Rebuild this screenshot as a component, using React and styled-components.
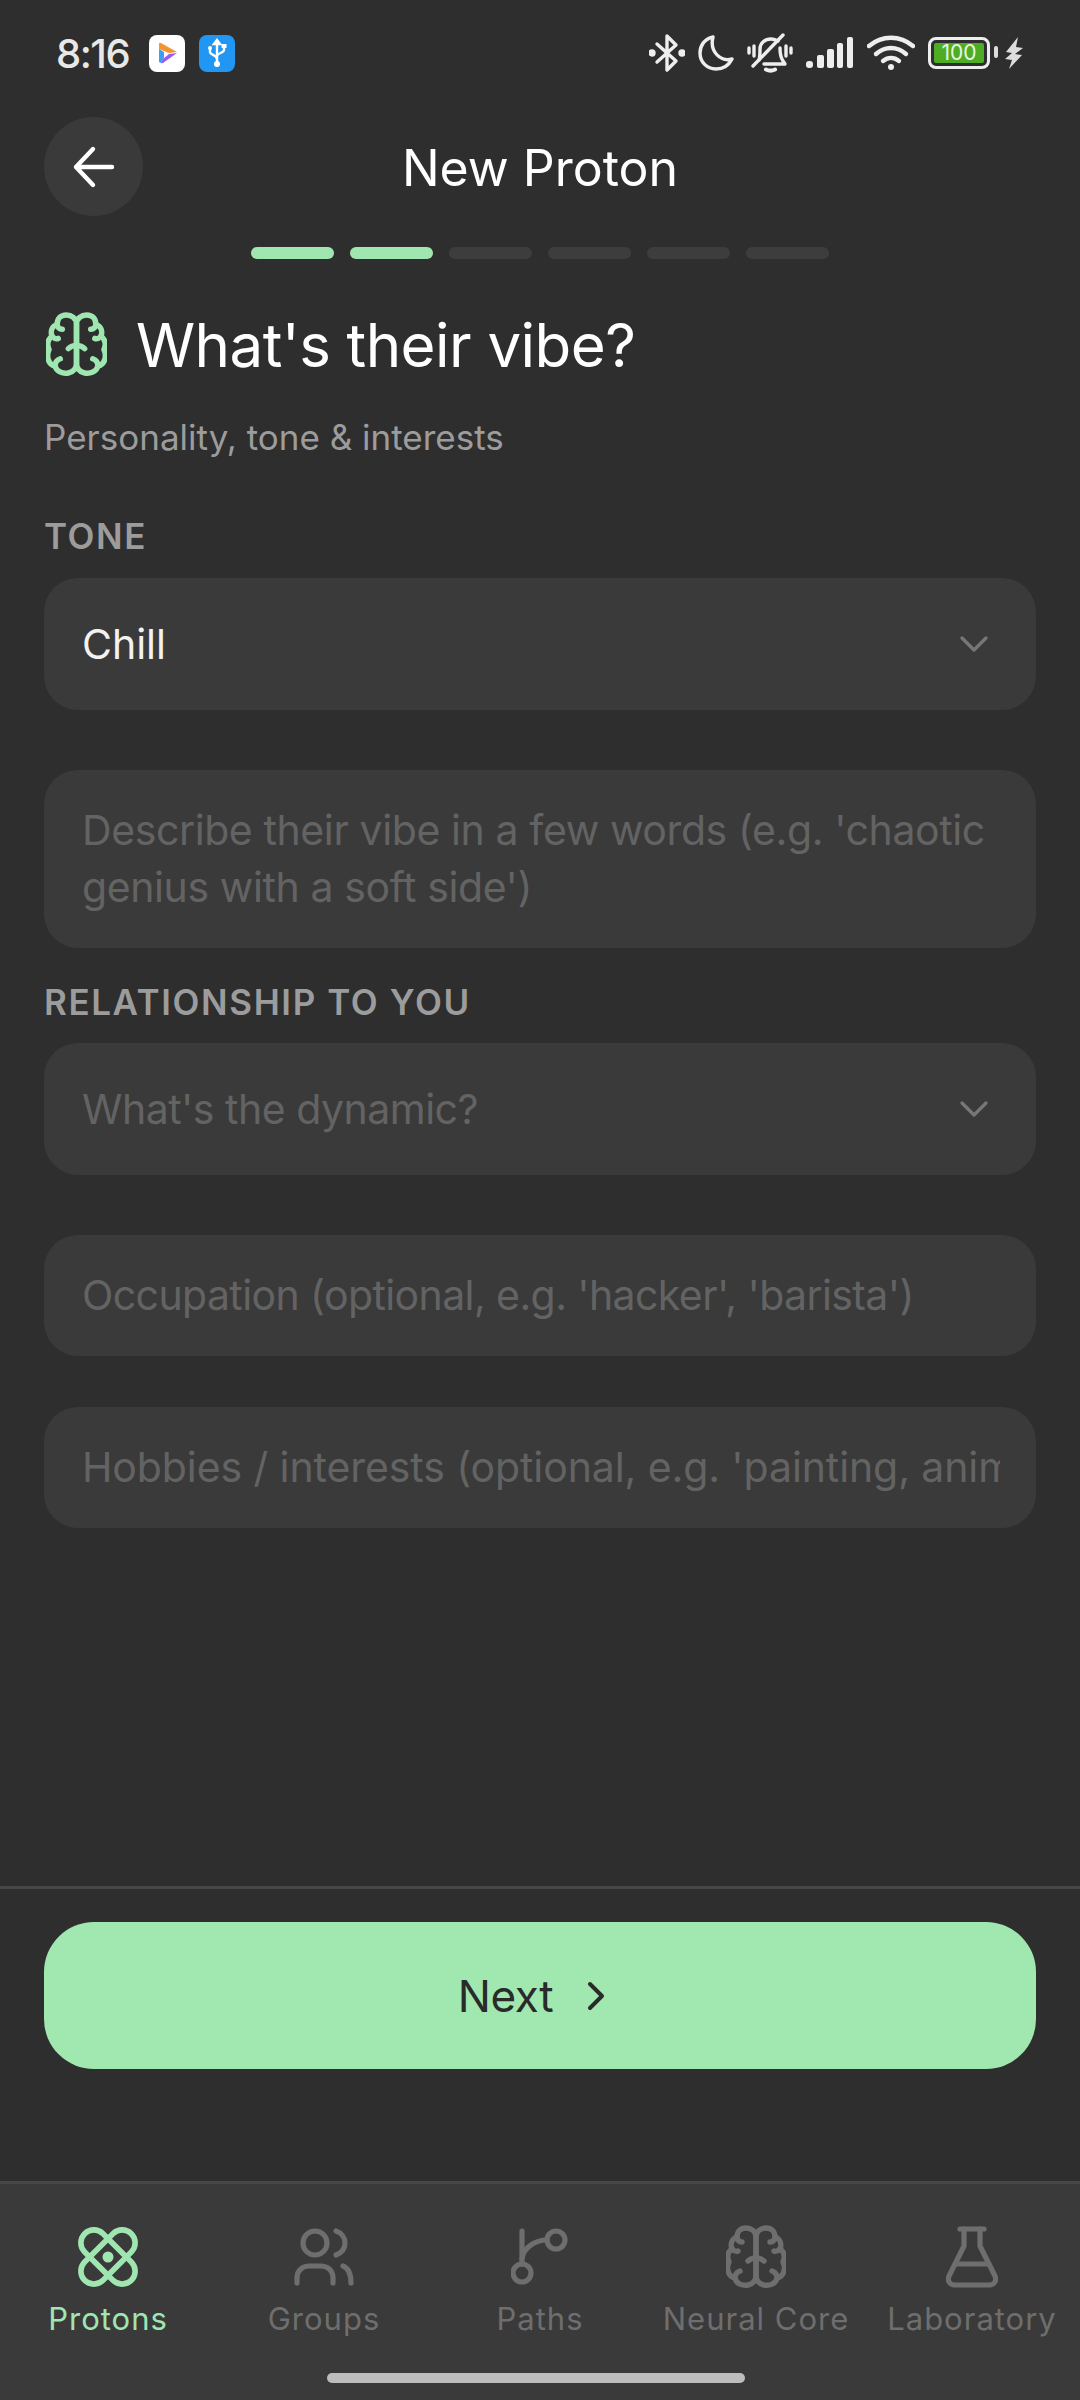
import React from 'react'
import styled, { createGlobalStyle } from 'styled-components'

const GlobalStyle = createGlobalStyle`
  html, body {
    margin: 0;
    padding: 0;
    background: #2e2e2e;
  }
  * {
    box-sizing: border-box;
  }
`

const FONT = `Inter, "Noto Sans", sans-serif`

const BluetoothIcon = () => (
  <svg width="36" height="40" viewBox="0 0 36 40" fill="none" stroke="#eee" strokeWidth="3.4" strokeLinejoin="round" strokeLinecap="round">
    <path d="M8 11l19 17-9 9V3l9 9L8 29" />
    <circle cx="3" cy="20" r="2" fill="#eee" />
    <circle cx="33" cy="20" r="2" fill="#eee" />
  </svg>
)

const MoonIcon = () => (
  <svg width="36" height="38" viewBox="0 0 36 38" fill="none" stroke="#eee" strokeWidth="3.4" strokeLinejoin="round">
    <path d="M15 3C6 5 2 12 2 19c0 9 7 16 16 16 7 0 13-4 16-10-10 3-23-6-19-22z" />
  </svg>
)

const MutedBellIcon = () => (
  <svg width="46" height="40" viewBox="0 0 46 40" fill="none" stroke="#eee" strokeWidth="3.4" strokeLinecap="round" strokeLinejoin="round">
    <path d="M12 27c1-3 1-8 1-11 0-6 5-10 11-10 3 0 5 1 7 2" />
    <path d="M33 15c0 6 1 10 3 13l2 3H17" />
    <path d="M19 36.500c3 1.500 6 1.500 9 0" strokeWidth="4" />
    <path d="M36 2L6 33" />
    <path d="M7 13v10M2 15v5M39 13v10M44 15v5" />
  </svg>
)

const SignalIcon = () => (
  <svg width="48" height="32" viewBox="0 0 48 32" fill="#eee">
    <rect x="0" y="24" width="7" height="7" rx="3" />
    <rect x="11" y="18" width="7" height="13" rx="2" />
    <rect x="21" y="12" width="7" height="19" rx="2" />
    <rect x="31" y="6" width="6" height="25" rx="2" />
    <rect x="41" y="0" width="6" height="31" rx="2" />
  </svg>
)

const WifiIcon = () => (
  <svg width="48" height="36" viewBox="0 0 48 36" fill="none" stroke="#eee" strokeWidth="4.4" strokeLinecap="round">
    <path d="M2 11c13-11 31-11 44 0" />
    <path d="M9 19c9-8 21-8 30 0" />
    <path d="M16 26c5-4 11-4 16 0" />
    <circle cx="24" cy="32" r="3" fill="#eee" stroke="none" />
  </svg>
)

const BoltIcon = () => (
  <svg width="18" height="32" viewBox="0 0 18 32" fill="#ddd">
    <path d="M13 0L1 15l6 1-7 6 7 1-3 9 13-14-7-1 8-6-7-1z" />
  </svg>
)

const PlayLogo = () => (
  <svg width="36" height="37" viewBox="0 0 36 37">
    <path d="M10 9q0-2 2-1l16 9-8 1-10-4z" fill="#f59331" />
    <path d="M28 18L14 28q-2 1-2-1l2-3 6-5z" fill="#9a5cf0" />
    <path d="M10 14l5 3v6l-3 5-2-1z" fill="#3d9df3" />
  </svg>
)

const UsbGlyph = () => (
  <svg width="22" height="30" viewBox="0 0 22 30" fill="none" stroke="#fff" strokeWidth="2.4" strokeLinecap="round">
    <path d="M11 4v22" />
    <path d="M8 6l3-4 3 4z" fill="#fff" />
    <path d="M4 11v3c0 3 7 3 7 7" />
    <path d="M18 9v3c0 3-7 3-7 6" />
    <circle cx="4" cy="10" r="2" fill="#fff" stroke="none" />
    <rect x="15.500" y="6" width="5" height="4" fill="#fff" stroke="none" />
    <circle cx="11" cy="26" r="3" fill="#fff" stroke="none" />
  </svg>
)

const brainHalf = (
  <>
    <path d="M30 12C30 6 25 3 20 3 14 3 11 7 11 12 6 14 4 19 6 24 1 27 1 33 3 37 0 43 2 52 9 53 10 59 17 61 22 60 27 59 30 55 30 50z" />
    <path d="M11 12c0 3 2 5 5 5M6 24c2 2 4 3 6 2M9 53c0-4 2-6 5-7M30 33c-3 0-6 1-8 3" />
  </>
)

const BrainIcon = ({ size }) => (
  <svg width={size} height={size * 64 / 60} viewBox="0 0 60 64" fill="none" stroke="currentColor" strokeWidth="5.4" strokeLinecap="round" strokeLinejoin="round">
    <g>{brainHalf}</g>
    <g transform="translate(60 0) scale(-1 1)">{brainHalf}</g>
  </svg>
)

const AtomIcon = () => (
  <svg width="60" height="60" viewBox="0 0 60 60" fill="none" stroke="currentColor" strokeWidth="5.600">
    <rect x="-3" y="17" width="66" height="26" rx="13" transform="rotate(45 30 30)" />
    <rect x="-3" y="17" width="66" height="26" rx="13" transform="rotate(-45 30 30)" />
    <circle cx="30" cy="30" r="5.500" fill="currentColor" stroke="none" />
  </svg>
)

const GroupsIcon = () => (
  <svg width="62" height="58" viewBox="0 0 62 58" fill="none" stroke="currentColor" strokeWidth="5.2" strokeLinecap="round">
    <circle cx="22" cy="15" r="12" />
    <path d="M4 55v-5c0-8 6-12 12-12h12c6 0 12 4 12 12v5" />
    <path d="M43 3c6 2 9 7 9 12 0 6-4 10-9 12" />
    <path d="M50 38c5 2 8 7 8 17" />
  </svg>
)

const PathIcon = () => (
  <svg width="58" height="58" viewBox="0 0 58 58" fill="none" stroke="currentColor" strokeWidth="5.200" strokeLinecap="round">
    <path d="M11 3v33" />
    <path d="M11 31c1-11 13-19 25-19" />
    <circle cx="11" cy="45" r="9" />
    <circle cx="45" cy="12" r="9" />
  </svg>
)

const FlaskIcon = () => (
  <svg width="52" height="62" viewBox="0 0 52 62" fill="none" stroke="currentColor" strokeWidth="5.200" strokeLinecap="round" strokeLinejoin="round">
    <path d="M14 3h24" />
    <path d="M18 3v17L3 50c-2 5 1 9 6 9h34c5 0 8-4 6-9L34 20V3" />
    <path d="M12 38h28" />
  </svg>
)

const Chevron = () => (
  <ChevronWrap>
    <svg width="28" height="18" viewBox="0 0 28 18" fill="none" stroke="#777" strokeWidth="3.200" strokeLinecap="round" strokeLinejoin="round">
      <path d="M2 3l12 12L26 3" />
    </svg>
  </ChevronWrap>
)

const ChevronWrap = styled.div`
  display: flex;
  margin-right: 12px;
`

const Page = styled.div`
  width: 1080px;
  height: 2400px;
  display: flex;
  flex-direction: column;
  background: #2e2e2e;
  font-family: ${FONT};
  overflow: hidden;
`

const StatusBar = styled.div`
  height: 106px;
  padding: 0 57px 0 56px;
  display: flex;
  align-items: center;
  justify-content: space-between;
`

const StatusLeft = styled.div`
  display: flex;
  align-items: center;
  gap: 14px;
`

const Clock = styled.span`
  font-size: 40px;
  font-weight: 500;
  color: #e8e8e8;
  letter-spacing: -1.5px;
  margin-right: 6px;
`

const AppTile = styled.div`
  width: 36px;
  height: 37px;
  border-radius: 8px;
  background: ${p => p.$bg};
  display: flex;
  align-items: center;
  justify-content: center;
`

const StatusRight = styled.div`
  display: flex;
  align-items: center;
  gap: 13px;
`

const Battery = styled.div`
  width: 62px;
  height: 32px;
  border: 3px solid #eee;
  border-radius: 8px;
  padding: 3px;
  margin-right: 2px;
  position: relative;
  display: flex;

  &::after {
    content: '';
    position: absolute;
    right: -11px;
    top: 6px;
    width: 4px;
    height: 12px;
    border-radius: 2px;
    background: #ddd;
  }
`

const BatteryFill = styled.div`
  flex: 1;
  background: #4fad24;
  border-radius: 2px;
  color: #e8f5e0;
  font-size: 21px;
  line-height: 20px;
  text-align: center;
`

const Header = styled.div`
  height: 126px;
  padding: 0 44px 2px;
  position: relative;
  display: flex;
  align-items: center;
  justify-content: center;
`

const BackButton = styled.div`
  position: absolute;
  left: 44px;
  top: 11px;
  width: 99px;
  height: 99px;
  border-radius: 50%;
  background: #3a3a3a;
  display: flex;
  align-items: center;
  justify-content: center;
`

const HeaderTitle = styled.h1`
  margin: 0;
  font-size: 50px;
  font-weight: 400;
  color: #fff;
`

const Progress = styled.div`
  display: flex;
  justify-content: center;
  gap: 16px;
  margin-top: 15px;
`

const Segment = styled.div`
  width: 83px;
  height: 12px;
  border-radius: 6px;
  background: ${p => (p.$on ? '#a0e6b0' : '#3d3d3d')};
`

const Form = styled.div`
  flex: 1;
  padding: 0 44px;
  display: flex;
  flex-direction: column;
`

const HeadingRow = styled.div`
  display: flex;
  align-items: center;
  gap: 29px;
  margin-top: 48px;
  padding-left: 2px;
  height: 76px;
  color: #a0e6b0;
`

const Heading = styled.h2`
  margin: 0;
  font-size: 60px;
  font-weight: 400;
  letter-spacing: -0.55px;
  color: #fff;
`

const Subtitle = styled.p`
  margin: 32px 0 0;
  font-size: 35px;
  line-height: 44px;
  color: #9c9c9c;
`

const FieldLabel = styled.div`
  font-size: 35px;
  font-weight: 600;
  line-height: 42px;
  letter-spacing: 1.6px;
  color: #9c9c9c;
  margin-top: ${p => p.$top}px;
  margin-bottom: ${p => p.$bottom}px;
`

const Field = styled.div`
  height: ${p => p.$h}px;
  margin-bottom: ${p => p.$bottom}px;
  border-radius: 34px;
  background: #3a3a3a;
  padding: 0 36px 0 38px;
  display: flex;
  align-items: ${p => (p.$multi ? 'flex-start' : 'center')};
  justify-content: space-between;
  overflow: hidden;
`

const FieldText = styled.span`
  font-size: 41px;
  line-height: 57px;
  white-space: ${p => (p.$wrap ? 'normal' : 'nowrap')};
  overflow: hidden;
  letter-spacing: ${p => p.$ls || 0}px;
  color: ${p => (p.$value ? '#f2f2f2' : '#636363')};
  padding-top: ${p => (p.$wrap ? '32px' : '0')};
`

const Footer = styled.div`
  height: 295px;
  border-top: 3px solid #474747;
  padding: 33px 44px 0;
`

const NextButton = styled.div`
  height: 147px;
  border-radius: 50px;
  background: #a0e8b0;
  color: #2a2a2a;
  font-size: 44px;
  font-weight: 400;
  letter-spacing: -0.4px;
  display: flex;
  align-items: center;
  justify-content: center;
  gap: 33px;
  padding-right: 16px;
`

const Nav = styled.nav`
  height: 219px;
  background: #3a3a3a;
  border-top: 3px solid #474747;
  display: grid;
  grid-template-columns: repeat(5, 1fr);
  position: relative;
  padding-top: 40px;
`

const NavItem = styled.div`
  display: flex;
  flex-direction: column;
  align-items: center;
  gap: 10px;
  color: ${p => (p.$active ? '#a0e6b0' : '#6e6e6e')};
`

const NavIconBox = styled.div`
  height: 66px;
  display: flex;
  align-items: center;
  justify-content: center;
`

const NavLabel = styled.span`
  font-size: 31px;
  letter-spacing: 1px;
  white-space: nowrap;
`

const HomeBar = styled.div`
  position: absolute;
  left: 327px;
  bottom: 17px;
  width: 418px;
  height: 10px;
  border-radius: 5px;
  background: #bdbdbd;
`

const navItems = [
  { label: 'Protons', icon: <AtomIcon />, active: true },
  { label: 'Groups', icon: <GroupsIcon /> },
  { label: 'Paths', icon: <PathIcon /> },
  { label: 'Neural Core', icon: <BrainIcon size={60} /> },
  { label: 'Laboratory', icon: <FlaskIcon /> },
]

export default function App() {
  return (
    <Page>
      <GlobalStyle />
      <StatusBar>
        <StatusLeft>
          <Clock>8:16</Clock>
          <AppTile $bg="#fff"><PlayLogo /></AppTile>
          <AppTile $bg="#2196f3"><UsbGlyph /></AppTile>
        </StatusLeft>
        <StatusRight>
          <BluetoothIcon />
          <MoonIcon />
          <MutedBellIcon />
          <SignalIcon />
          <WifiIcon />
          <Battery><BatteryFill>100</BatteryFill></Battery>
          <BoltIcon />
        </StatusRight>
      </StatusBar>

      <Header>
        <BackButton>
          <svg width="44" height="44" viewBox="0 0 44 44" fill="none" stroke="#fff" strokeWidth="4.400" strokeLinecap="round" strokeLinejoin="round">
            <path d="M40 22H4M21 4L4 22l17 18" />
          </svg>
        </BackButton>
        <HeaderTitle>New Proton</HeaderTitle>
      </Header>

      <Progress>
        {[0, 1, 2, 3, 4, 5].map(i => <Segment key={i} $on={i < 2} />)}
      </Progress>

      <Form>
        <HeadingRow>
          <BrainIcon size={61} />
          <Heading>What's their vibe?</Heading>
        </HeadingRow>
        <Subtitle>Personality, tone &amp; interests</Subtitle>

        <FieldLabel $top={56} $bottom={21}>TONE</FieldLabel>
        <Field $h={132} $bottom={60}>
          <FieldText $value>Chill</FieldText>
          <Chevron />
        </Field>
        <Field $h={178} $bottom={33} $multi>
          <FieldText $wrap $ls={-0.4}>Describe their vibe in a few words (e.g. 'chaotic genius with a soft side')</FieldText>
        </Field>
        <FieldLabel $top={0} $bottom={20}>RELATIONSHIP TO YOU</FieldLabel>
        <Field $h={132} $bottom={60}>
          <FieldText $ls={-0.5}>What's the dynamic?</FieldText>
          <Chevron />
        </Field>
        <Field $h={121} $bottom={51}>
          <FieldText $ls={-0.6}>Occupation (optional, e.g. 'hacker', 'barista')</FieldText>
        </Field>
        <Field $h={121} $bottom={0}>
          <FieldText $ls={-0.1}>Hobbies / interests (optional, e.g. 'painting, anime')</FieldText>
        </Field>
      </Form>

      <Footer>
        <NextButton>
          <span>Next</span>
          <svg width="20" height="30" viewBox="0 0 20 30" fill="none" stroke="#2a2a2a" strokeWidth="4" strokeLinecap="round" strokeLinejoin="round">
            <path d="M4 3l12 12L4 27" />
          </svg>
        </NextButton>
      </Footer>

      <Nav>
        {navItems.map(item => (
          <NavItem key={item.label} $active={item.active}>
            <NavIconBox>{item.icon}</NavIconBox>
            <NavLabel>{item.label}</NavLabel>
          </NavItem>
        ))}
        <HomeBar />
      </Nav>
    </Page>
  )
}
